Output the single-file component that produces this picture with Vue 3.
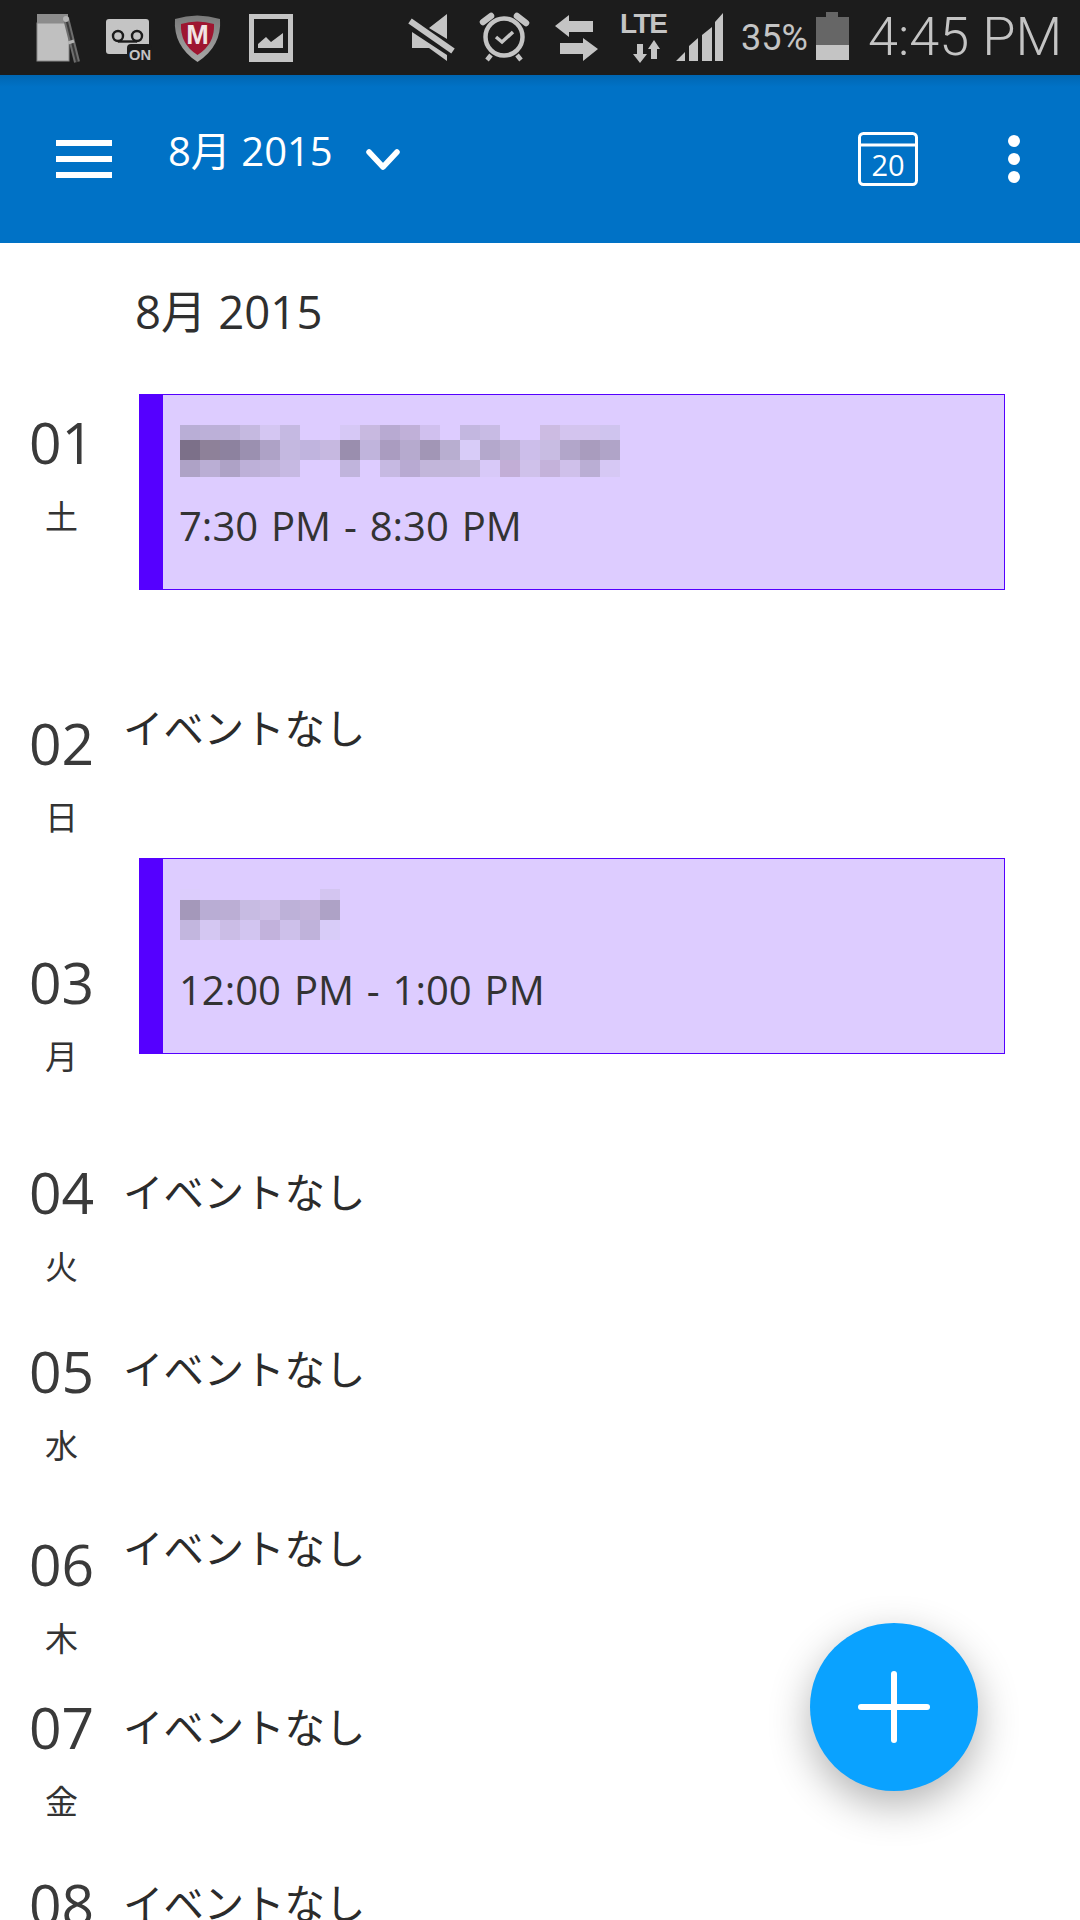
<script setup>
const row = (h, ...cells) => ({ h, cells })
const n = null
const blur1 = [
  row(15, 'b9aed6','bcb0d8','bdb1d8','c5b9e0','d4c6f2','c5b9e2',n,n,'d6c8f5','c8b9e0','b8aad2','c0b0d8','d0c0ee',n,'c3b7e0','c8bbe4',n,n,'ccbbe2','d3c4ee','d3c4ee','cfc4ee'),
  row(20, '7c7089','8e8199','8d829f','9b90b0','aea2c6','c4b8e0','c0b4de','c6b8e0','9a8eae','c0b4dc','aa9cc0','b6aace','a296b6','b8aed0','d8ccf8','b4a8cc','bcb0d4','ccbeea','c8bce2','b2a6ca','a99cbe','b0a4c8'),
  row(17, 'aea2c6','baaed4','aea2c6','bdb0d8','c0b3da','c6b9e2',n,n,'c0b4dc',n,'c6b9e2','b8aad2','c2b6da','c2b6da','c4b8dc','d8c9f8','c2aed6','cfc1ea','c4b2da','cfc0ea','baaed4','d6c8f4')
]
const blur2 = [
  row(11, 'dccdfc',n,n,n,n,n,n,'d3c5f0'),
  row(20, 'a498ba','b9add4','bbaed4','c7bbe2','ccbee6','bdb1d8','c2b3da','aea2c6'),
  row(20, 'c2b6de','d4c7f2','cbbde6','d2c5f0','c2b2dc','cdc0ea','bfb2da','d8ccf8')
]
const days = [
  { num: '01', wd: '土', h: 304, dp: 13, cp: 0, blur: blur1, time: '7:30 PM - 8:30 PM' },
  { num: '02', wd: '日', h: 160, dp: 10, cp: 1 },
  { num: '03', wd: '月', h: 299, dp: 89, cp: 0, blur: blur2, time: '12:00 PM - 1:00 PM' },
  { num: '04', wd: '火', h: 179, dp: 0, cp: 6 },
  { num: '05', wd: '水', h: 183, dp: 0, cp: 4 },
  { num: '06', wd: '木', h: 173, dp: 10, cp: 0 },
  { num: '07', wd: '金', h: 177, dp: 0, cp: 6 },
  { num: '08', wd: '土', h: 176, dp: 0, cp: 5 }
]
</script>

<template>
  <div class="screen">
    <div class="status">
      <svg class="si notepad" viewBox="34 12 46 52">
        <rect x="37" y="14" width="31" height="9" fill="#8c8c8c"/>
        <rect x="37" y="23" width="32" height="38" fill="#c0c0c0" stroke="#8a8a8a"/>
        <path d="M66 18 L77 62" stroke="#6e6e6e" stroke-width="6"/>
        <path d="M66 18 L77 62" stroke="#3a3a3a" stroke-width="2"/>
        <circle cx="66" cy="19" r="3" fill="#b4b4b4"/>
        <path d="M68 43 l6 -2" stroke="#b4b4b4" stroke-width="3"/>
      </svg>
      <svg class="si voicemail" viewBox="105 18 47 44">
        <rect x="106" y="19" width="43" height="35" rx="3" fill="#c4c4c4"/>
        <rect x="127" y="44" width="25" height="18" rx="4" fill="#1c1c1c"/>
        <circle cx="118" cy="36" r="5" fill="none" stroke="#1c1c1c" stroke-width="2.4"/>
        <circle cx="137" cy="36" r="5" fill="none" stroke="#1c1c1c" stroke-width="2.4"/>
        <path d="M118 41.5 H137" stroke="#1c1c1c" stroke-width="2.4"/>
        <text x="129" y="60" class="on" textLength="22" lengthAdjust="spacingAndGlyphs">ON</text>
      </svg>
      <svg class="si mcafee" viewBox="175 14 45 48">
        <defs>
          <linearGradient id="rim" x1="0" y1="0" x2="0" y2="1">
            <stop offset="0" stop-color="#7a7a7a"/>
            <stop offset="1" stop-color="#a8a8a8"/>
          </linearGradient>
        </defs>
        <path d="M175 19 Q197 12 220 19 Q222 46 197.500 62 Q173 46 175 19Z" fill="url(#rim)"/>
        <path d="M181 24 Q197 19 214 24 Q215 44 197.500 55 Q180 44 181 24Z" fill="#9e1530"/>
        <text x="197.500" y="44" class="m" text-anchor="middle">M</text>
      </svg>
      <svg class="si picture" viewBox="249 14 44 48">
        <rect x="249" y="14" width="44" height="48" fill="#c4c4c4"/>
        <rect x="254" y="19" width="34" height="34" fill="#1c1c1c"/>
        <path d="M258 48 V44 L266 37 L271 42 L283 33 V48Z" fill="#c4c4c4"/>
      </svg>

      <svg class="si mute" viewBox="408 13 48 49">
        <path d="M429 28 L447 14 V39Z M412 32 V48 H429 L447 61 V55Z" fill="#c4c4c4"/>
        <path d="M410 21 L453 51" stroke="#c4c4c4" stroke-width="6"/>
      </svg>
      <svg class="si alarm" viewBox="480 13 49 50">
        <circle cx="504" cy="37" r="18.500" fill="none" stroke="#c4c4c4" stroke-width="4.500"/>
        <path d="M496 37 L502 42 L513 32" fill="none" stroke="#c4c4c4" stroke-width="3.500"/>
        <path d="M483 22 L491 16 M517 16 L526 23" stroke="#c4c4c4" stroke-width="6.500" stroke-linecap="round"/>
        <path d="M487 60 L491 55 M517 55 L521 60" stroke="#c4c4c4" stroke-width="4.500"/>
      </svg>
      <svg class="si arrows" viewBox="555 15 44 47">
        <path d="M555 26 L569 15 V21 H593 V32 H569 V37Z M598 49 L583 38 V43 H560 V54 H583 V61Z" fill="#c4c4c4"/>
      </svg>
      <div class="lte">
        <span class="ltetext">LTE</span>
        <svg class="lte-arrows" viewBox="633 40 27 24">
          <path d="M640 63 L633 54 H637 V44 H643 V54 H647Z M654 40 L660 49 H657 V59 H651 V49 H648Z" fill="#c4c4c4"/>
        </svg>
      </div>
      <svg class="si signal" viewBox="675 13 49 49">
        <path d="M676 61 L685 52 V61Z M689 61 V46 L698 38 V61Z M702 61 V35 L712 27 V61Z M715 61 V22 L723 13 V61Z" fill="#c4c4c4"/>
      </svg>
      <span class="pct">35%</span>
      <svg class="si battery" viewBox="816 12 33 48">
        <path d="M826 12 H838 V17 H849 V45 H816 V17 H826Z" fill="#666"/>
        <rect x="816" y="45" width="33" height="15" fill="#c4c4c4"/>
      </svg>
      <span class="clock">4:45 PM</span>
    </div>

    <header class="bar">
      <div class="burger"><i></i><i></i><i></i></div>
      <span class="bar-title">8月 2015</span>
      <svg class="chev" viewBox="0 0 34 22">
        <path d="M3 3 L17 18 L31 3" fill="none" stroke="#fff" stroke-width="5.500" stroke-linecap="round" stroke-linejoin="round"/>
      </svg>
      <span class="grow"></span>
      <svg class="cal" viewBox="0 0 60 54">
        <rect x="1.500" y="1.500" width="57" height="51" rx="4" fill="none" stroke="#fff" stroke-width="3"/>
        <path d="M1.500 13 H58.500" stroke="#fff" stroke-width="3"/>
        <text x="30" y="43.500" class="caltext" text-anchor="middle">20</text>
      </svg>
      <div class="dots"><i></i><i></i><i></i></div>
    </header>

    <main class="agenda">
      <h1 class="month">8月 2015</h1>
      <section v-for="d in days" :key="d.num" class="day" :style="{ height: d.h + 'px' }">
        <div class="date" :style="{ paddingTop: d.dp + 'px' }">
          <div class="num">{{ d.num }}</div>
          <div class="wd">{{ d.wd }}</div>
        </div>
        <div class="body" :style="{ paddingTop: d.cp + 'px' }">
          <article v-if="d.blur" class="event">
            <div class="hidden-title">
              <div v-for="(r, i) in d.blur" :key="i" class="bl-row" :style="{ height: r.h + 'px' }">
                <span v-for="(c, j) in r.cells" :key="j" class="cell" :style="{ background: c ? '#' + c : 'transparent' }"></span>
              </div>
            </div>
            <div class="time">{{ d.time }}</div>
          </article>
          <div v-else class="none">イベントなし</div>
        </div>
      </section>
    </main>

    <button class="fab" aria-label="add"><i class="h"></i><i class="v"></i></button>
  </div>
</template>

<style scoped>
.screen {
  position: relative;
  width: 1080px;
  height: 1920px;
  overflow: hidden;
  background: #fff;
  font-family: "Open Sans", "Noto Sans CJK JP", sans-serif;
  color: #2b2b2b;
}
.status {
  display: flex;
  align-items: flex-start;
  height: 75px;
  background: #1c1c1c;
  padding-left: 34px;
  box-sizing: border-box;
  color: #c4c4c4;
}
.si { display: block; flex: none; overflow: visible; }
.notepad { width: 46px; height: 52px; margin-top: 12px; }
.voicemail { width: 47px; height: 44px; margin-top: 18px; margin-left: 25px; }
.mcafee { width: 45px; height: 48px; margin-top: 14px; margin-left: 23px; }
.picture { width: 44px; height: 48px; margin-top: 14px; margin-left: 29px; }
.mute { width: 48px; height: 49px; margin-top: 13px; margin-left: 115px; }
.alarm { width: 49px; height: 50px; margin-top: 13px; margin-left: 24px; }
.arrows { width: 44px; height: 47px; margin-top: 15px; margin-left: 26px; }
.lte { width: 49px; height: 64px; margin-left: 21px; flex: none; display: flex; flex-direction: column; }
.ltetext {
  display: block;
  height: 27px;
  margin-top: 9px;
  font: 700 28px/29px "Liberation Sans", sans-serif;
  letter-spacing: -1.5px;
  color: #c4c4c4;
  white-space: nowrap;
}
.lte-arrows { width: 27px; height: 24px; margin: 4px 0 0 13px; display: block; overflow: visible; }
.signal { width: 49px; height: 49px; margin-top: 13px; margin-left: 6px; }
.battery { width: 33px; height: 48px; margin-top: 12px; margin-left: 9px; }
.on { font: 700 15px "Liberation Sans", sans-serif; fill: #c4c4c4; }
.m { font: 900 27px "Liberation Sans", sans-serif; fill: #f1e3e3; }
.pct {
  width: 66px;
  margin-left: 17px;
  margin-top: 17px;
  font: 400 36px/42px Roboto, sans-serif;
  white-space: nowrap;
}
.clock {
  margin-left: 19px;
  margin-top: 5px;
  font: 300 54px/64px Roboto, sans-serif;
  white-space: nowrap;
}
.bar {
  display: flex;
  align-items: center;
  height: 168px;
  background: linear-gradient(#0066b2, #0072c6 12px);
  position: relative;
  color: #fff;
}
.burger {
  width: 56px;
  margin-left: 56px;
  display: flex;
  flex-direction: column;
  gap: 10px;
}
.burger i { display: block; height: 6px; background: #fff; }
.bar-title {
  margin-left: 56px;
  margin-bottom: 16px;
  font-size: 40px;
  line-height: 56px;
  white-space: nowrap;
}
.chev { width: 34px; height: 22px; margin-left: 33px; margin-top: 2px; display: block; }
.grow { flex: 1; }
.cal { width: 60px; height: 54px; margin-right: 90px; display: block; }
.caltext { font: 400 29px "Open Sans", sans-serif; fill: #fff; }
.dots { width: 12px; margin-right: 60px; display: flex; flex-direction: column; gap: 6px; }
.dots i { display: block; width: 12px; height: 12px; border-radius: 50%; background: #fff; }
.agenda { display: flex; flex-direction: column; }
.month {
  margin: 38px 0 53px 135px;
  font-size: 45.5px;
  line-height: 60px;
  font-weight: 400;
  color: #2f2f2f;
}
.day { display: flex; flex: none; }
.date { width: 123px; flex: none; text-align: center; box-sizing: border-box; }
.num { font-size: 57px; line-height: 70px; font-weight: 400; color: #3a3a3a; }
.wd { font-size: 33px; line-height: 40px; margin-top: 20px; color: #333; }
.body { flex: 1; box-sizing: border-box; }
.event {
  box-sizing: border-box;
  width: 866px;
  height: 196px;
  margin-left: 16px;
  padding: 30px 0 0 17px;
  background: #ddccff;
  border: 1px solid #5500ff;
  border-left: 24px solid #5500ff;
}
.hidden-title { height: 52px; }
.bl-row { display: flex; }
.cell { display: block; width: 20px; flex: none; }
.time {
  margin-top: 22px;
  margin-left: -1px;
  font-size: 40px;
  line-height: 54px;
  word-spacing: 2.5px;
  color: #333;
  white-space: nowrap;
}
.none {
  font-size: 40.4px;
  line-height: 60px;
  color: #2b2b2b;
}
.fab {
  position: absolute;
  left: 810px;
  top: 1623px;
  width: 168px;
  height: 168px;
  padding: 0;
  border: 0;
  border-radius: 50%;
  background: #0aa2ff;
  box-shadow: 0 14px 42px rgba(0, 0, 0, 0.3);
}
.fab i { position: absolute; background: #fff; border-radius: 3px; display: block; }
.fab .h { left: 48px; top: 81px; width: 72px; height: 6px; }
.fab .v { left: 81px; top: 48px; width: 6px; height: 72px; }
</style>

<style>
html, body { margin: 0; overflow: hidden; }
</style>
